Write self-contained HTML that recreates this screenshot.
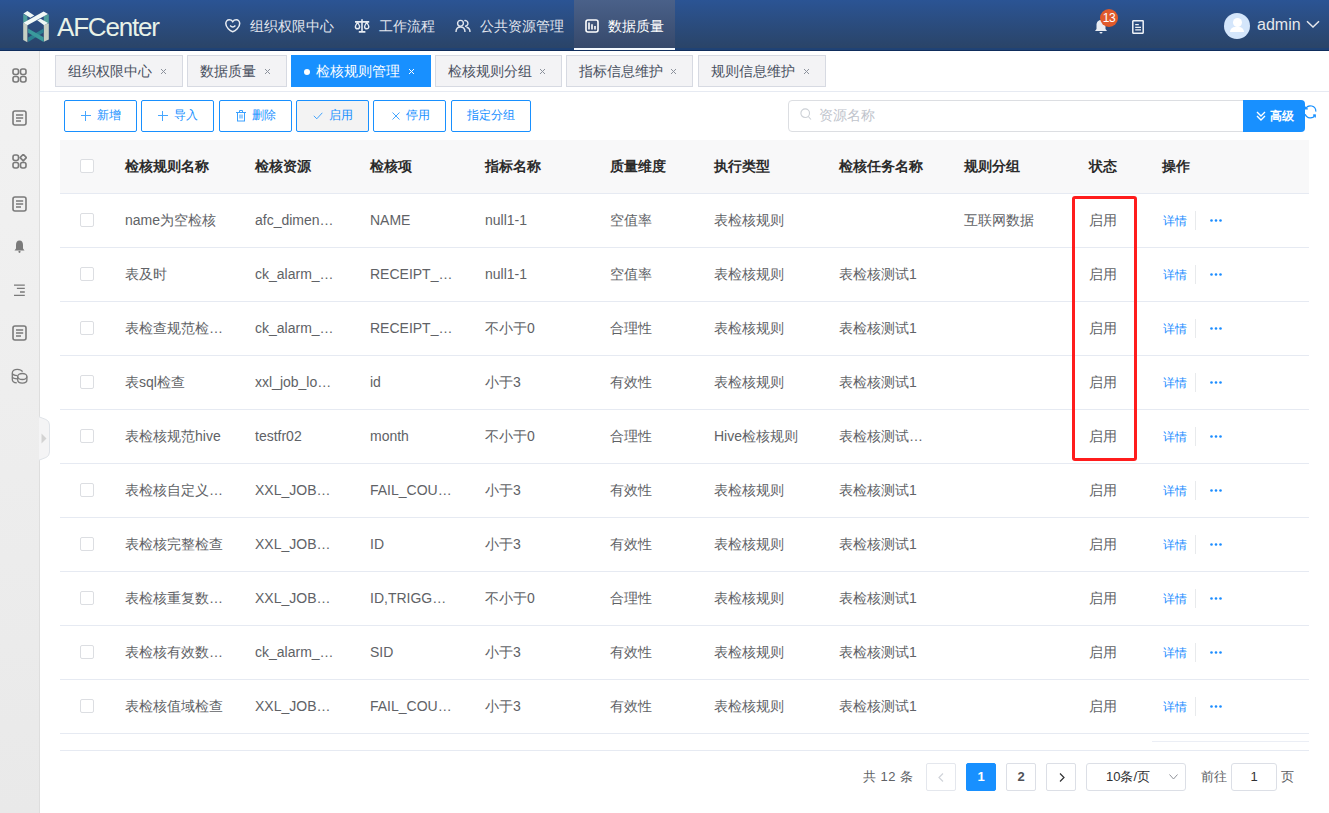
<!DOCTYPE html>
<html><head><meta charset="utf-8">
<style>
*{box-sizing:border-box;margin:0;padding:0}
html,body{width:1329px;height:813px;overflow:hidden;background:#fff;font-family:"Liberation Sans",sans-serif;color:#606266}
.abs{position:absolute}
#hdr{position:absolute;left:0;top:0;width:1329px;height:51px;background:linear-gradient(#2b5494,#2a4468 48px,#1f4275 48px,#1f4275 50px,#0f2d5c 50px)}
.nav{position:absolute;top:0;height:50px;line-height:52px;font-size:14px;color:#e2e6ee;white-space:nowrap}
.nav svg{position:absolute}
#side{position:absolute;left:0;top:51px;width:40px;height:762px;background:linear-gradient(#f2f2f2,#e9e9e9);border-right:1px solid #dedede}
.sico{position:absolute;left:12px}
.tab{position:absolute;top:55px;height:32px;border:1px solid #d7dae2;background:#f3f3f5;font-size:14px;color:#495060;line-height:30px;white-space:nowrap}
.tab .x{position:absolute;font-size:11px;color:#808695}
.btn{position:absolute;top:100px;height:32px;border:1px solid #1890ff;border-radius:2px;background:#fff;color:#1890ff;font-size:12px;line-height:29px;white-space:nowrap}
.th{position:absolute;font-size:14px;font-weight:bold;color:#2b2b2b;white-space:nowrap;line-height:20px}
.td{position:absolute;font-size:14px;color:#606266;white-space:nowrap;line-height:20px}
.cb{position:absolute;left:80px;width:14px;height:14px;border:1px solid #dcdee2;border-radius:2px;background:#fff}
.rl{position:absolute;left:60px;width:1249px;height:1px;background:#e6eaf2}
.lk{position:absolute;font-size:12px;color:#1a8cff;line-height:20px}
.pg{position:absolute;top:763px;height:28px;width:30px;border:1px solid #dcdfe6;border-radius:2px;background:#fff;font-size:13px;font-weight:bold;color:#303133;text-align:center;line-height:26px}
</style></head><body>
<div id="hdr">
  <!-- logo -->
  <svg class="abs" style="left:23px;top:11px" width="27" height="33" viewBox="0 0 27 33">
    <path d="M0.2,3.1 L4.4,5.3 L4.4,13 L0.2,11.5 Z" fill="#4f9e9c"/>
    <path d="M20.8,5 L25.8,3.2 L25.8,12 L20.8,13.5 Z" fill="#4f9e9c"/>
    <path d="M0.2,11.8 L4.4,14 L4.4,31.2 L0.2,28.9 Z" fill="#c6cfc3"/>
    <path d="M20.8,14 L25.8,12.2 L25.8,28.5 L20.8,30.7 Z" fill="#c6cfc3"/>
    <path d="M5.1,26.5 L20.6,17.6 L20.6,21.6 L5.1,30.9 Z" fill="#2a8090"/>
    <path d="M5.1,17.4 L20.6,26.3 L20.6,30.9 L5.1,21.8 Z" fill="#3a9a9c"/>
    <path d="M0.4,2.4 L4.4,0 L11.3,4.4 L7.3,6.8 Z" fill="#eef7f5"/>
    <path d="M14.2,9.3 L17.6,7.8 L25,12 L21.1,14.2 Z" fill="#eef7f5"/>
    <path d="M0.4,11.7 L20.6,0.4 L25,2.9 L4.4,14.2 Z" fill="#f2faf8"/>
  </svg>
  <div class="abs" style="left:57px;top:9px;font-size:26px;color:#e8f2e8;line-height:36px;letter-spacing:-1.2px">AFCenter</div>

  <div class="nav" style="left:224px">
    <svg style="left:1px;top:19px" width="16" height="14" viewBox="0 0 16 14"><path d="M7.75,2.6 C6.8,1.2 5.5,0.8 4.2,0.8 C2.2,0.8 0.8,2.4 0.8,4.6 C0.8,8.6 5,11.8 7.75,12.7 C10.5,11.8 14.7,8.6 14.7,4.6 C14.7,2.4 13.3,0.8 11.3,0.8 C10,0.8 8.7,1.2 7.75,2.6 Z" fill="none" stroke="#e8ecf2" stroke-width="1.5"/><path d="M5.1,6.6 Q7.75,9.6 10.4,6.6" fill="none" stroke="#e8ecf2" stroke-width="1.5"/></svg>
    <span style="position:absolute;left:26px">组织权限中心</span>
  </div>
  <div class="nav" style="left:354px">
    <svg style="left:0px;top:19px" width="16" height="14" viewBox="0 0 16 14" fill="none" stroke="#e8ecf2" stroke-width="1.4"><path d="M1,2.9 H15.2 M8,0.3 V12.7 M4.8,12.9 H11.4" stroke-width="1.6"/><path d="M3.5,3.3 C2.6,5 1.4,6.4 1.4,7.7 A2.1,2.1 0 0 0 5.6,7.7 C5.6,6.4 4.4,5 3.5,3.3 Z"/><path d="M12.7,3.3 C11.8,5 10.6,6.4 10.6,7.7 A2.1,2.1 0 0 0 14.8,7.7 C14.8,6.4 13.6,5 12.7,3.3 Z"/></svg>
    <span style="position:absolute;left:25px">工作流程</span>
  </div>
  <div class="nav" style="left:455px">
    <svg style="left:0px;top:19px" width="16" height="14" viewBox="0 0 16 14" fill="none" stroke="#e2e6ee" stroke-width="1.4"><circle cx="5.5" cy="4.3" r="2.9"/><path d="M1,13 C1,9.5 2.5,8 5.5,8 C8.5,8 10,9.5 10,13"/><path d="M9.3,1.6 A2.9,2.9 0 1 1 10,7.3"/><path d="M11.5,8.2 C13.8,8.6 15,10 15,13"/></svg>
    <span style="position:absolute;left:25px">公共资源管理</span>
  </div>
  <div class="nav" style="left:574px;width:101px;height:48px;background:linear-gradient(#4a6189,#36496b);color:#fff">
    <svg style="left:11px;top:19px" width="14" height="14" viewBox="0 0 14 14"><rect x="1" y="1" width="12" height="12" rx="2" fill="none" stroke="#fff" stroke-width="1.6"/><path d="M4,3.6 V10.6 M7,5.2 V10.6 M10,7 V10.6" stroke="#fff" stroke-width="1.6"/></svg>
    <span style="position:absolute;left:34px">数据质量</span>
    <div style="position:absolute;left:0;top:48px;width:101px;height:2px;background:#f4f9ff"></div>
  </div>

  <!-- right icons -->
  <svg class="abs" style="left:1094px;top:19px" width="14" height="15" viewBox="0 0 14 15"><path d="M7,1 C4,1 2.5,3.5 2.5,6 V10 L1,12 H13 L11.5,10 V6 C11.5,3.5 10,1 7,1 Z" fill="#e8ecf2"/><path d="M5.5,13 A1.5,1.5 0 0 0 8.5,13 Z" fill="#e8ecf2"/></svg>
  <div class="abs" style="left:1100px;top:9px;width:18px;height:18px;border-radius:50%;background:#e05a2b;color:#fff;font-size:12px;line-height:18px;text-align:center;letter-spacing:-0.3px">13</div>
  <svg class="abs" style="left:1132px;top:20px" width="12" height="14" viewBox="0 0 12 14"><rect x="0.8" y="0.8" width="10.4" height="12.4" rx="0.4" fill="none" stroke="#eef2f7" stroke-width="1.5"/><path d="M3.2,4.6 H6.8 M3.2,7.3 H9 M3.2,9.8 H9" stroke="#eef2f7" stroke-width="1.2"/></svg>
  <div class="abs" style="left:1224px;top:13px;width:26px;height:26px;border-radius:50%;background:#d4e6fb;overflow:hidden">
    <div style="position:absolute;left:9px;top:5px;width:9px;height:9px;border-radius:50%;background:#fff"></div>
    <div style="position:absolute;left:6px;top:14px;width:14px;height:5px;border-radius:5px 5px 0 0;background:#fff"></div>
  </div>
  <div class="abs" style="left:1257px;top:13px;font-size:16px;color:#e6e8ec;line-height:24px">admin</div>
  <svg class="abs" style="left:1306px;top:19px" width="14" height="9" viewBox="0 0 14 9"><path d="M1,2.3 L7,8 L13,2.3" fill="none" stroke="#e6e8ec" stroke-width="1.5"/></svg>
</div>

<div id="side">
  <svg class="sico" style="top:17px" width="15" height="15" viewBox="0 0 15 15" fill="none" stroke="#7a7a7a" stroke-width="1.6"><rect x="1" y="1" width="5.5" height="5.5" rx="1.9"/><rect x="8.5" y="1" width="5.5" height="5.5" rx="1.9"/><rect x="1" y="8.5" width="5.5" height="5.5" rx="1.9"/><rect x="8.5" y="8.5" width="5.5" height="5.5" rx="1.9"/></svg>
  <svg class="sico" style="top:59px" width="15" height="16" viewBox="0 0 15 16" fill="none" stroke="#7a7a7a" stroke-width="1.6"><rect x="1" y="1" width="13" height="14" rx="2"/><path d="M4,5 H11.2 M4,8 H11.2 M4,11 H9"/></svg>
  <svg class="sico" style="top:103px" width="15" height="15" viewBox="0 0 15 15" fill="none" stroke="#7a7a7a" stroke-width="1.6"><rect x="1" y="1" width="5.5" height="5.5" rx="1.9"/><path d="M11.25,0.3 L14.4,3.6 L11.25,6.9 L8.1,3.6 Z" stroke-linejoin="round"/><rect x="1" y="8.5" width="5.5" height="5.5" rx="1.9"/><rect x="8.5" y="8.5" width="5.5" height="5.5" rx="1.9"/></svg>
  <svg class="sico" style="top:145px" width="15" height="16" viewBox="0 0 15 16" fill="none" stroke="#7a7a7a" stroke-width="1.6"><rect x="1" y="1" width="13" height="14" rx="2"/><path d="M4,5 H11.2 M4,8 H11.2 M4,11 H9"/></svg>
  <svg class="sico" style="top:189px;left:14px" width="11" height="13" viewBox="0 0 11 13"><path d="M5.5,0.5 C3,0.5 2,2.5 2,5 V8.5 L0.5,10.5 H10.5 L9,8.5 V5 C9,2.5 8,0.5 5.5,0.5 Z" fill="#7a7a7a"/><circle cx="5.5" cy="11.8" r="1.1" fill="#7a7a7a"/></svg>
  <svg class="sico" style="top:233px;left:13px" width="12" height="13" viewBox="0 0 12 13" fill="none" stroke="#7a7a7a" stroke-width="1.3"><path d="M1,1.1 H11.8 M3.9,4.4 H11.8 M7,8 H11.8 M1,11.3 H11.8"/></svg>
  <svg class="sico" style="top:274px" width="15" height="16" viewBox="0 0 15 16" fill="none" stroke="#7a7a7a" stroke-width="1.6"><rect x="1" y="1" width="13" height="14" rx="2"/><path d="M4,5 H11.2 M4,8 H11.2 M4,11 H9"/></svg>
  <svg class="abs" style="left:8px;top:313px" width="24" height="24" viewBox="0 0 24 24" fill="none" stroke="#7a7a7a" stroke-width="1.3"><path d="M14.6,7.6 C13.6,6.1 11.6,5.3 9.3,5.3 C6.4,5.3 4.3,6.9 4.3,8.9 V15.4 C4.3,17.2 6.1,18.6 8.8,18.9"/><path d="M4.3,9.5 C4.6,10.6 6.6,11.4 9.4,11.6"/><path d="M4.3,12.8 C4.6,13.9 6.6,14.6 9.4,14.8"/><ellipse cx="14.3" cy="12.5" rx="4.6" ry="3"/><path d="M9.7,12.5 V16.1 C9.7,17.9 11.8,19.2 14.3,19.2 C16.8,19.2 18.9,17.9 18.9,16.1 V12.5"/></svg>
</div>
<svg class="abs" style="left:39px;top:416px" width="12" height="45" viewBox="0 0 12 45"><path d="M0,0.8 L7,3.5 Q10.5,5 10.5,9 V36 Q10.5,40 7,41.5 L0,44.2 Z" fill="#f4f4f5"/><path d="M0,0.8 L7,3.5 Q10.5,5 10.5,9 V36 Q10.5,40 7,41.5 L0,44.2" fill="none" stroke="#dfe3e8" stroke-width="1"/><path d="M2.5,17.5 L7.5,22.5 L2.5,27.5 Z" fill="#d3d3d3"/></svg>
<div class="tab" style="left:55px;width:128px"><span style="position:absolute;left:12px">组织权限中心</span></div>
<svg class="abs" style="left:160px;top:68.0px" width="7" height="7" viewBox="0 0 7 7"><path d="M1,1 L6,6 M6,1 L1,6" stroke="#8c929c" stroke-width="1"/></svg>
<div class="tab" style="left:187px;width:100px"><span style="position:absolute;left:12px">数据质量</span></div>
<svg class="abs" style="left:264px;top:68.0px" width="7" height="7" viewBox="0 0 7 7"><path d="M1,1 L6,6 M6,1 L1,6" stroke="#8c929c" stroke-width="1"/></svg>
<div class="tab" style="left:291px;width:140px;background:#1890ff;border-color:#1890ff;color:#fff"><span style="position:absolute;left:12px;top:13px;width:6px;height:6px;border-radius:50%;background:#fff"></span><span style="position:absolute;left:24px">检核规则管理</span></div>
<svg class="abs" style="left:408px;top:68.0px" width="7" height="7" viewBox="0 0 7 7"><path d="M1,1 L6,6 M6,1 L1,6" stroke="#fff" stroke-width="1"/></svg>
<div class="tab" style="left:435px;width:127px"><span style="position:absolute;left:12px">检核规则分组</span></div>
<svg class="abs" style="left:539px;top:68.0px" width="7" height="7" viewBox="0 0 7 7"><path d="M1,1 L6,6 M6,1 L1,6" stroke="#8c929c" stroke-width="1"/></svg>
<div class="tab" style="left:566px;width:127px"><span style="position:absolute;left:12px">指标信息维护</span></div>
<svg class="abs" style="left:670px;top:68.0px" width="7" height="7" viewBox="0 0 7 7"><path d="M1,1 L6,6 M6,1 L1,6" stroke="#8c929c" stroke-width="1"/></svg>
<div class="tab" style="left:698px;width:128px"><span style="position:absolute;left:12px">规则信息维护</span></div>
<svg class="abs" style="left:803px;top:68.0px" width="7" height="7" viewBox="0 0 7 7"><path d="M1,1 L6,6 M6,1 L1,6" stroke="#8c929c" stroke-width="1"/></svg>
<div class="abs" style="left:40px;top:91px;width:1289px;height:1px;background:#e6eaf2"></div>
<div class="btn" style="left:64px;width:73px;background:#fff"><svg style="position:absolute;left:16px;top:10px" width="10" height="10" viewBox="0 0 10 10"><path d="M4.5,0 V10 M0,4.5 H10" stroke="#1890ff" stroke-width="1" opacity="0.8"/></svg><span style="position:absolute;left:32px">新增</span></div>
<div class="btn" style="left:141px;width:73px;background:#fff"><svg style="position:absolute;left:16px;top:10px" width="10" height="10" viewBox="0 0 10 10"><path d="M4.5,0 V10 M0,4.5 H10" stroke="#1890ff" stroke-width="1" opacity="0.8"/></svg><span style="position:absolute;left:32px">导入</span></div>
<div class="btn" style="left:219px;width:73px;background:#fff"><svg style="position:absolute;left:16px;top:9px" width="10" height="12" viewBox="0 0 10 12" fill="none" stroke="#1890ff" stroke-width="1" opacity="0.85"><path d="M0,2.5 H10 M3.5,2.5 V0.5 H6.5 V2.5"/><rect x="1.5" y="2.5" width="7" height="8.5"/><path d="M4,4.5 V8.5 M6,4.5 V8.5"/></svg><span style="position:absolute;left:32px">删除</span></div>
<div class="btn" style="left:296px;width:73px;background:#f3f3f3"><svg style="position:absolute;left:16px;top:11px" width="10" height="8" viewBox="0 0 10 8"><path d="M0.8,3.8 L3.8,6.8 L9.3,0.8" fill="none" stroke="#1890ff" stroke-width="1" opacity="0.8"/></svg><span style="position:absolute;left:32px">启用</span></div>
<div class="btn" style="left:373px;width:73px;background:#fff"><svg style="position:absolute;left:18px;top:11px" width="8" height="8" viewBox="0 0 8 8"><path d="M0.5,0.5 L7.5,7.5 M7.5,0.5 L0.5,7.5" stroke="#1890ff" stroke-width="1" opacity="0.8"/></svg><span style="position:absolute;left:32px">停用</span></div>
<div class="btn" style="left:451px;width:80px;background:#fff"><span style="position:absolute;left:15px">指定分组</span></div>
<div class="abs" style="left:788px;top:100px;width:460px;height:32px;border:1px solid #dcdee2;border-radius:4px 0 0 4px;background:#fff"></div>
<svg class="abs" style="left:800px;top:108px" width="12" height="13" viewBox="0 0 12 13" fill="none" stroke="#ccd0d6" stroke-width="1.1"><circle cx="5.2" cy="5.2" r="4.3"/><path d="M8.3,8.5 L11,11.5"/></svg>
<div class="abs" style="left:819px;top:105px;font-size:14px;color:#c0c4cc;line-height:20px">资源名称</div>
<div class="abs" style="left:1243px;top:100px;width:62px;height:32px;background:#1890ff;border-radius:0 4px 4px 0;color:#fff;font-size:12px;font-weight:bold;line-height:32px"><svg style="position:absolute;left:13px;top:11px" width="10" height="10" viewBox="0 0 10 10" fill="none" stroke="#fff" stroke-width="1.4"><path d="M1,1 L5,5 L9,1 M1,5 L5,9 L9,5"/></svg><span style="position:absolute;left:27px">高级</span></div>
<svg class="abs" style="left:1302px;top:104px" width="16" height="16" viewBox="0 0 16 16" fill="none" stroke="#1890ff" stroke-width="1.2"><path d="M3.6,4.8 A5.4,5.4 0 0 1 13.8,7.6"/><path d="M3.3,2.7 L3.6,4.9 L5.8,4.9"/><path d="M3.2,10.3 A5.4,5.4 0 0 0 13.1,11"/><path d="M11,11.2 L13.2,11 L13.3,13.4"/></svg>
<div class="abs" style="left:60px;top:140px;width:1249px;height:53px;background:#f8f8f9"></div>
<div class="rl" style="top:193px"></div>
<div class="cb" style="top:159px"></div>
<div class="th" style="left:125px;top:156px">检核规则名称</div>
<div class="th" style="left:255px;top:156px">检核资源</div>
<div class="th" style="left:370px;top:156px">检核项</div>
<div class="th" style="left:485px;top:156px">指标名称</div>
<div class="th" style="left:610px;top:156px">质量维度</div>
<div class="th" style="left:714px;top:156px">执行类型</div>
<div class="th" style="left:839px;top:156px">检核任务名称</div>
<div class="th" style="left:964px;top:156px">规则分组</div>
<div class="th" style="left:1089px;top:156px">状态</div>
<div class="th" style="left:1162px;top:156px">操作</div>
<div class="cb" style="top:213px"></div>
<div class="td" style="left:125px;top:210px">name为空检核</div>
<div class="td" style="left:255px;top:210px">afc_dimen…</div>
<div class="td" style="left:370px;top:210px">NAME</div>
<div class="td" style="left:485px;top:210px">null1-1</div>
<div class="td" style="left:610px;top:210px">空值率</div>
<div class="td" style="left:714px;top:210px">表检核规则</div>
<div class="td" style="left:964px;top:210px">互联网数据</div>
<div class="td" style="left:1089px;top:210px">启用</div>
<div class="lk" style="left:1163px;top:211px">详情</div>
<div class="abs" style="left:1195px;top:211px;width:1px;height:19px;background:#e8eaec"></div>
<svg class="abs" style="left:1210px;top:219px" width="12" height="3" viewBox="0 0 12 3" fill="#1a8cff"><circle cx="1.5" cy="1.5" r="1.3"/><circle cx="6" cy="1.5" r="1.3"/><circle cx="10.5" cy="1.5" r="1.3"/></svg>
<div class="rl" style="top:247px"></div>
<div class="cb" style="top:267px"></div>
<div class="td" style="left:125px;top:264px">表及时</div>
<div class="td" style="left:255px;top:264px">ck_alarm_…</div>
<div class="td" style="left:370px;top:264px">RECEIPT_…</div>
<div class="td" style="left:485px;top:264px">null1-1</div>
<div class="td" style="left:610px;top:264px">空值率</div>
<div class="td" style="left:714px;top:264px">表检核规则</div>
<div class="td" style="left:839px;top:264px">表检核测试1</div>
<div class="td" style="left:1089px;top:264px">启用</div>
<div class="lk" style="left:1163px;top:265px">详情</div>
<div class="abs" style="left:1195px;top:265px;width:1px;height:19px;background:#e8eaec"></div>
<svg class="abs" style="left:1210px;top:273px" width="12" height="3" viewBox="0 0 12 3" fill="#1a8cff"><circle cx="1.5" cy="1.5" r="1.3"/><circle cx="6" cy="1.5" r="1.3"/><circle cx="10.5" cy="1.5" r="1.3"/></svg>
<div class="rl" style="top:301px"></div>
<div class="cb" style="top:321px"></div>
<div class="td" style="left:125px;top:318px">表检查规范检…</div>
<div class="td" style="left:255px;top:318px">ck_alarm_…</div>
<div class="td" style="left:370px;top:318px">RECEIPT_…</div>
<div class="td" style="left:485px;top:318px">不小于0</div>
<div class="td" style="left:610px;top:318px">合理性</div>
<div class="td" style="left:714px;top:318px">表检核规则</div>
<div class="td" style="left:839px;top:318px">表检核测试1</div>
<div class="td" style="left:1089px;top:318px">启用</div>
<div class="lk" style="left:1163px;top:319px">详情</div>
<div class="abs" style="left:1195px;top:319px;width:1px;height:19px;background:#e8eaec"></div>
<svg class="abs" style="left:1210px;top:327px" width="12" height="3" viewBox="0 0 12 3" fill="#1a8cff"><circle cx="1.5" cy="1.5" r="1.3"/><circle cx="6" cy="1.5" r="1.3"/><circle cx="10.5" cy="1.5" r="1.3"/></svg>
<div class="rl" style="top:355px"></div>
<div class="cb" style="top:375px"></div>
<div class="td" style="left:125px;top:372px">表sql检查</div>
<div class="td" style="left:255px;top:372px">xxl_job_lo…</div>
<div class="td" style="left:370px;top:372px">id</div>
<div class="td" style="left:485px;top:372px">小于3</div>
<div class="td" style="left:610px;top:372px">有效性</div>
<div class="td" style="left:714px;top:372px">表检核规则</div>
<div class="td" style="left:839px;top:372px">表检核测试1</div>
<div class="td" style="left:1089px;top:372px">启用</div>
<div class="lk" style="left:1163px;top:373px">详情</div>
<div class="abs" style="left:1195px;top:373px;width:1px;height:19px;background:#e8eaec"></div>
<svg class="abs" style="left:1210px;top:381px" width="12" height="3" viewBox="0 0 12 3" fill="#1a8cff"><circle cx="1.5" cy="1.5" r="1.3"/><circle cx="6" cy="1.5" r="1.3"/><circle cx="10.5" cy="1.5" r="1.3"/></svg>
<div class="rl" style="top:409px"></div>
<div class="cb" style="top:429px"></div>
<div class="td" style="left:125px;top:426px">表检核规范hive</div>
<div class="td" style="left:255px;top:426px">testfr02</div>
<div class="td" style="left:370px;top:426px">month</div>
<div class="td" style="left:485px;top:426px">不小于0</div>
<div class="td" style="left:610px;top:426px">合理性</div>
<div class="td" style="left:714px;top:426px">Hive检核规则</div>
<div class="td" style="left:839px;top:426px">表检核测试…</div>
<div class="td" style="left:1089px;top:426px">启用</div>
<div class="lk" style="left:1163px;top:427px">详情</div>
<div class="abs" style="left:1195px;top:427px;width:1px;height:19px;background:#e8eaec"></div>
<svg class="abs" style="left:1210px;top:435px" width="12" height="3" viewBox="0 0 12 3" fill="#1a8cff"><circle cx="1.5" cy="1.5" r="1.3"/><circle cx="6" cy="1.5" r="1.3"/><circle cx="10.5" cy="1.5" r="1.3"/></svg>
<div class="rl" style="top:463px"></div>
<div class="cb" style="top:483px"></div>
<div class="td" style="left:125px;top:480px">表检核自定义…</div>
<div class="td" style="left:255px;top:480px">XXL_JOB…</div>
<div class="td" style="left:370px;top:480px">FAIL_COU…</div>
<div class="td" style="left:485px;top:480px">小于3</div>
<div class="td" style="left:610px;top:480px">有效性</div>
<div class="td" style="left:714px;top:480px">表检核规则</div>
<div class="td" style="left:839px;top:480px">表检核测试1</div>
<div class="td" style="left:1089px;top:480px">启用</div>
<div class="lk" style="left:1163px;top:481px">详情</div>
<div class="abs" style="left:1195px;top:481px;width:1px;height:19px;background:#e8eaec"></div>
<svg class="abs" style="left:1210px;top:489px" width="12" height="3" viewBox="0 0 12 3" fill="#1a8cff"><circle cx="1.5" cy="1.5" r="1.3"/><circle cx="6" cy="1.5" r="1.3"/><circle cx="10.5" cy="1.5" r="1.3"/></svg>
<div class="rl" style="top:517px"></div>
<div class="cb" style="top:537px"></div>
<div class="td" style="left:125px;top:534px">表检核完整检查</div>
<div class="td" style="left:255px;top:534px">XXL_JOB…</div>
<div class="td" style="left:370px;top:534px">ID</div>
<div class="td" style="left:485px;top:534px">小于3</div>
<div class="td" style="left:610px;top:534px">有效性</div>
<div class="td" style="left:714px;top:534px">表检核规则</div>
<div class="td" style="left:839px;top:534px">表检核测试1</div>
<div class="td" style="left:1089px;top:534px">启用</div>
<div class="lk" style="left:1163px;top:535px">详情</div>
<div class="abs" style="left:1195px;top:535px;width:1px;height:19px;background:#e8eaec"></div>
<svg class="abs" style="left:1210px;top:543px" width="12" height="3" viewBox="0 0 12 3" fill="#1a8cff"><circle cx="1.5" cy="1.5" r="1.3"/><circle cx="6" cy="1.5" r="1.3"/><circle cx="10.5" cy="1.5" r="1.3"/></svg>
<div class="rl" style="top:571px"></div>
<div class="cb" style="top:591px"></div>
<div class="td" style="left:125px;top:588px">表检核重复数…</div>
<div class="td" style="left:255px;top:588px">XXL_JOB…</div>
<div class="td" style="left:370px;top:588px">ID,TRIGG…</div>
<div class="td" style="left:485px;top:588px">不小于0</div>
<div class="td" style="left:610px;top:588px">合理性</div>
<div class="td" style="left:714px;top:588px">表检核规则</div>
<div class="td" style="left:839px;top:588px">表检核测试1</div>
<div class="td" style="left:1089px;top:588px">启用</div>
<div class="lk" style="left:1163px;top:589px">详情</div>
<div class="abs" style="left:1195px;top:589px;width:1px;height:19px;background:#e8eaec"></div>
<svg class="abs" style="left:1210px;top:597px" width="12" height="3" viewBox="0 0 12 3" fill="#1a8cff"><circle cx="1.5" cy="1.5" r="1.3"/><circle cx="6" cy="1.5" r="1.3"/><circle cx="10.5" cy="1.5" r="1.3"/></svg>
<div class="rl" style="top:625px"></div>
<div class="cb" style="top:645px"></div>
<div class="td" style="left:125px;top:642px">表检核有效数…</div>
<div class="td" style="left:255px;top:642px">ck_alarm_…</div>
<div class="td" style="left:370px;top:642px">SID</div>
<div class="td" style="left:485px;top:642px">小于3</div>
<div class="td" style="left:610px;top:642px">有效性</div>
<div class="td" style="left:714px;top:642px">表检核规则</div>
<div class="td" style="left:839px;top:642px">表检核测试1</div>
<div class="td" style="left:1089px;top:642px">启用</div>
<div class="lk" style="left:1163px;top:643px">详情</div>
<div class="abs" style="left:1195px;top:643px;width:1px;height:19px;background:#e8eaec"></div>
<svg class="abs" style="left:1210px;top:651px" width="12" height="3" viewBox="0 0 12 3" fill="#1a8cff"><circle cx="1.5" cy="1.5" r="1.3"/><circle cx="6" cy="1.5" r="1.3"/><circle cx="10.5" cy="1.5" r="1.3"/></svg>
<div class="rl" style="top:679px"></div>
<div class="cb" style="top:699px"></div>
<div class="td" style="left:125px;top:696px">表检核值域检查</div>
<div class="td" style="left:255px;top:696px">XXL_JOB…</div>
<div class="td" style="left:370px;top:696px">FAIL_COU…</div>
<div class="td" style="left:485px;top:696px">小于3</div>
<div class="td" style="left:610px;top:696px">有效性</div>
<div class="td" style="left:714px;top:696px">表检核规则</div>
<div class="td" style="left:839px;top:696px">表检核测试1</div>
<div class="td" style="left:1089px;top:696px">启用</div>
<div class="lk" style="left:1163px;top:697px">详情</div>
<div class="abs" style="left:1195px;top:697px;width:1px;height:19px;background:#e8eaec"></div>
<svg class="abs" style="left:1210px;top:705px" width="12" height="3" viewBox="0 0 12 3" fill="#1a8cff"><circle cx="1.5" cy="1.5" r="1.3"/><circle cx="6" cy="1.5" r="1.3"/><circle cx="10.5" cy="1.5" r="1.3"/></svg>
<div class="rl" style="top:733px"></div>
<div class="rl" style="top:750px"></div>
<div class="abs" style="left:1152px;top:741px;width:157px;height:1px;background:#ebeef5"></div>
<div class="abs" style="left:1072px;top:196px;width:65px;height:265px;border:3px solid #ff1c1c;border-radius:3px"></div>
<div class="abs" style="left:863px;top:767px;font-size:13px;color:#606266;line-height:20px;letter-spacing:0.5px">共 12 条</div>
<div class="pg" style="left:926px;border-color:#e4e7ed"><svg style="position:absolute;left:11px;top:9px" width="6" height="9" viewBox="0 0 6 9"><path d="M5,0.5 L1,4.5 L5,8.5" fill="none" stroke="#d0d3d9" stroke-width="1.2"/></svg></div>
<div class="pg" style="left:966px;background:#1890ff;border-color:#1890ff;color:#fff">1</div>
<div class="pg" style="left:1006px;color:#505258">2</div>
<div class="pg" style="left:1046px"><svg style="position:absolute;left:12px;top:9px" width="6" height="9" viewBox="0 0 6 9"><path d="M1,0.5 L5,4.5 L1,8.5" fill="none" stroke="#303133" stroke-width="1.2"/></svg></div>
<div class="abs" style="left:1086px;top:763px;width:100px;height:28px;border:1px solid #dcdfe6;border-radius:3px;background:#fff"><span style="position:absolute;left:19px;top:3px;font-size:13px;color:#303133;line-height:20px">10条/页</span><svg style="position:absolute;left:82px;top:10px" width="9" height="6" viewBox="0 0 9 6"><path d="M0.5,0.5 L4.5,5 L8.5,0.5" fill="none" stroke="#909399" stroke-width="1"/></svg></div>
<div class="abs" style="left:1201px;top:767px;font-size:13px;color:#606266;line-height:20px">前往</div>
<div class="abs" style="left:1231px;top:763px;width:46px;height:28px;border:1px solid #dcdfe6;border-radius:3px;background:#fff;text-align:center;font-size:13px;color:#303133;line-height:26px">1</div>
<div class="abs" style="left:1281px;top:767px;font-size:13px;color:#606266;line-height:20px">页</div>
</body></html>
